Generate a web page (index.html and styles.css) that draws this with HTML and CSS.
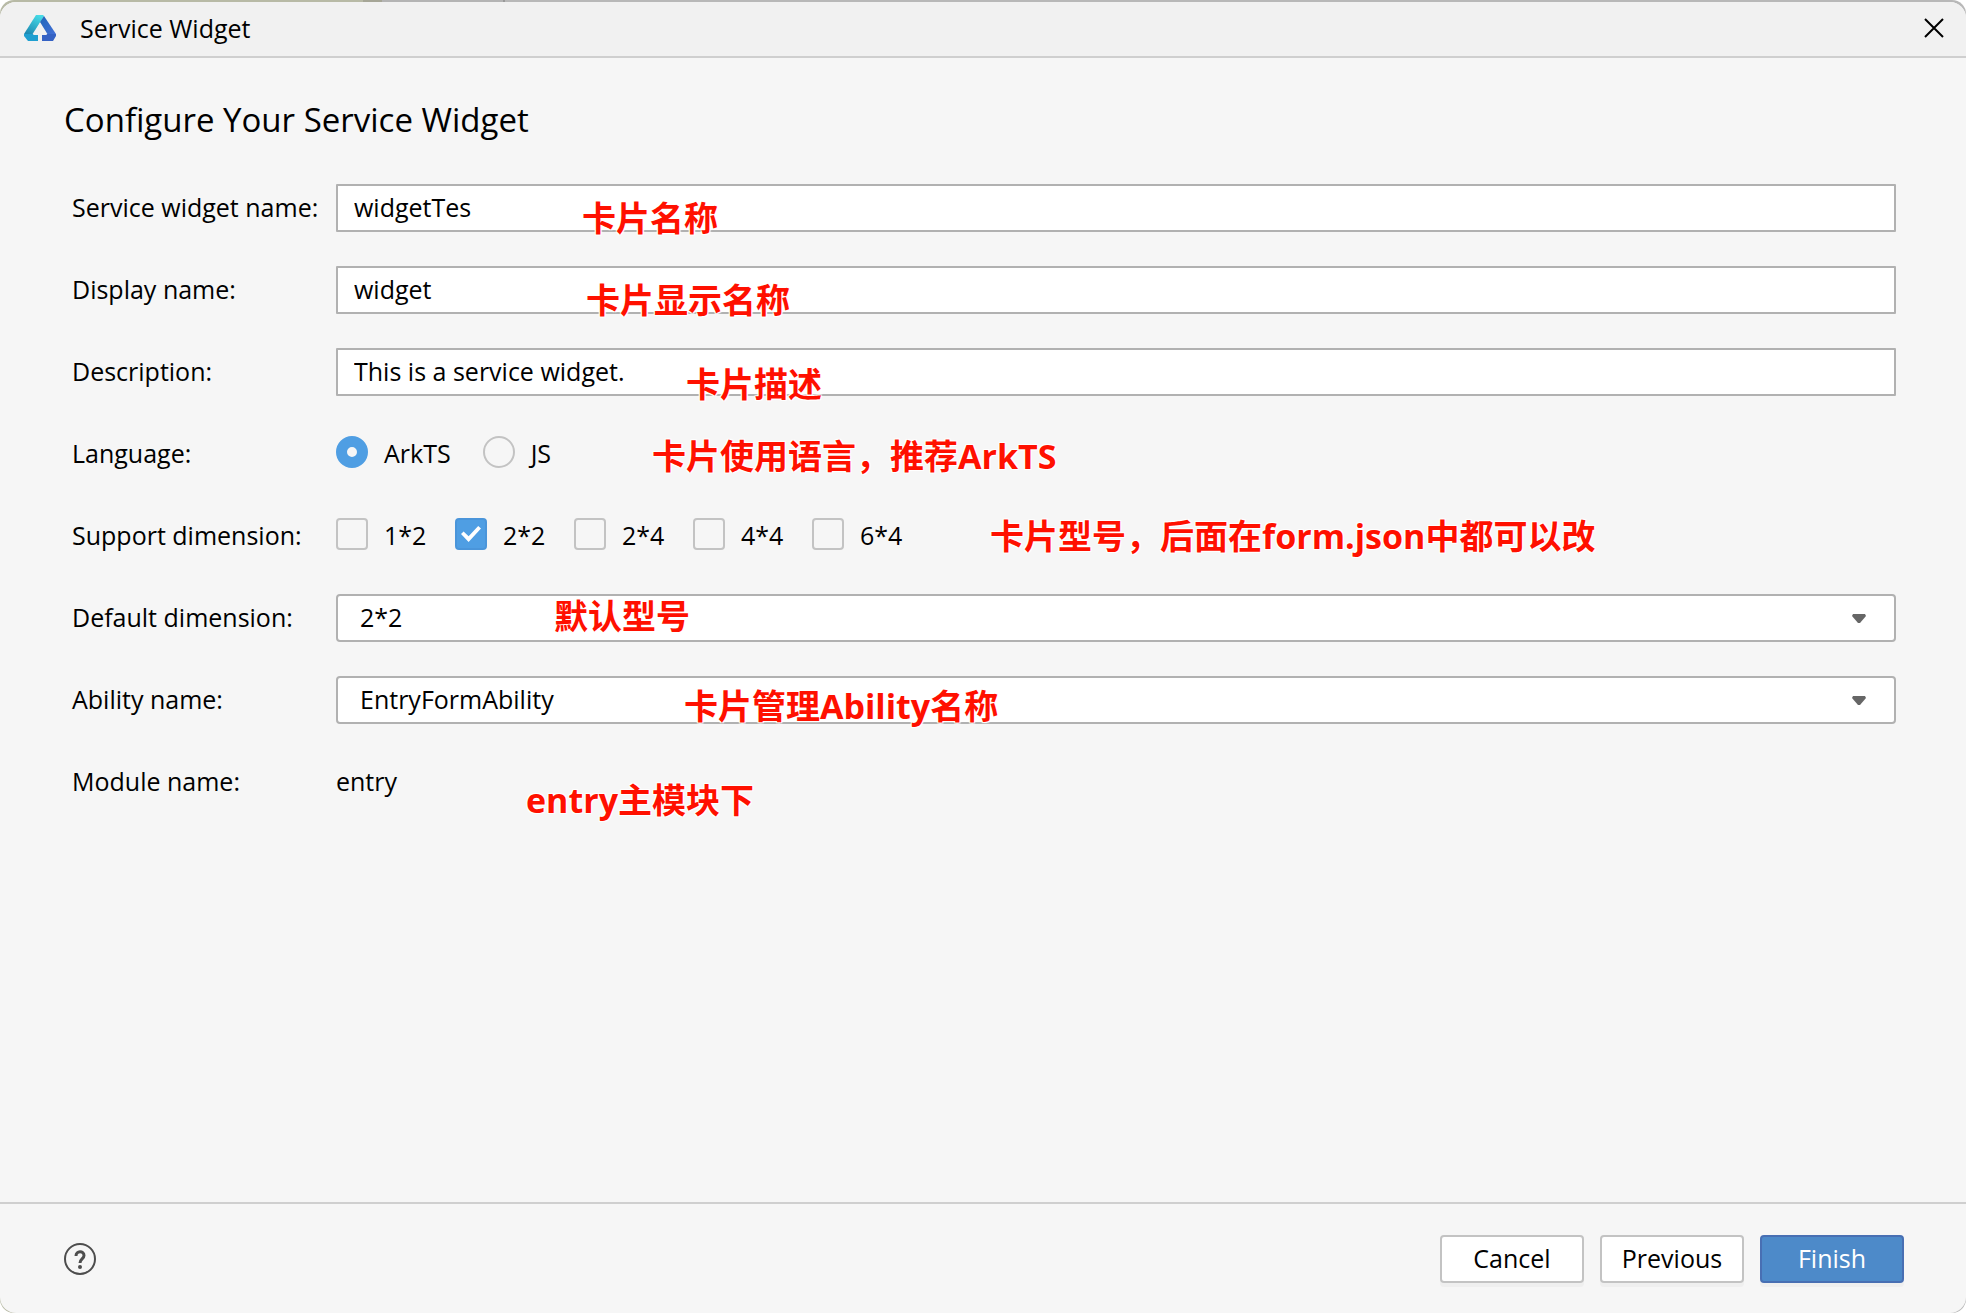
FILE: index.html
```html
<!DOCTYPE html>
<html lang="en">

<head>
    <meta charset="UTF-8">
    <meta name="viewport" content="width=device-width, initial-scale=1.0">
    <title>Service Widget</title>

    <link rel="stylesheet" href="styles.css">
</head>

<body>
    <div class="window_frame">
        <form action="#" class="window" name="widgetForm">
            <header class="title_bar">
                <svg class="logo" viewBox="0 0 32 26" aria-hidden="true">
                    <defs>
                        <linearGradient id="teal" x1="0.7" y1="0" x2="0.2" y2="1">
                            <stop offset="0" stop-color="#46dbe6" />
                            <stop offset="1" stop-color="#1c86b0" />
                        </linearGradient>
                        <linearGradient id="blue" x1="0" y1="0" x2="1" y2="1">
                            <stop offset="0" stop-color="#1f66b8" />
                            <stop offset="1" stop-color="#4470d8" />
                        </linearGradient>
                    </defs>
                    <path d="M12 0H19L20 1L8 20H0V19Z" fill="url(#teal)" />
                    <path d="M20 1L32 19V20H24L16 7Z" fill="url(#blue)" />
                    <path d="M0 19H14V26H4L0 21Z" fill="#1f9fd0" />
                    <path d="M18 19H32V21L29 26H18Z" fill="#3562c4" />
                    <path d="M16 8L23 20H18V21H14V20H9Z" fill="#f1f1f1" />
                </svg>
                <span class="window_title">Service Widget</span>
                <button type="button" class="close_btn" aria-label="Close">
                    <svg viewBox="0 0 20 20" aria-hidden="true">
                        <path d="M1 1L19 19M19 1L1 19" />
                    </svg>
                </button>
            </header>

            <main class="content">
                <h1>Configure Your Service Widget</h1>

                <div class="row">
                    <label for="widgetName">Service widget name:</label>
                    <div class="field">
                        <input type="text" class="text_input" name="widgetName" id="widgetName" value="widgetTes">
                        <span class="note note_name">卡片名称</span>
                    </div>
                </div>

                <div class="row">
                    <label for="displayName">Display name:</label>
                    <div class="field">
                        <input type="text" class="text_input" name="displayName" id="displayName" value="widget">
                        <span class="note note_display">卡片显示名称</span>
                    </div>
                </div>

                <div class="row">
                    <label for="description">Description:</label>
                    <div class="field">
                        <input type="text" class="text_input" name="description" id="description"
                            value="This is a service widget.">
                        <span class="note note_description">卡片描述</span>
                    </div>
                </div>

                <div class="row" role="radiogroup" aria-labelledby="languageLabel">
                    <span id="languageLabel">Language:</span>
                    <div class="field options">
                        <label class="option"><input type="radio" name="language" value="ArkTS" checked>ArkTS</label>
                        <label class="option"><input type="radio" name="language" value="JS">JS</label>
                        <span class="note note_language">卡片使用语言，推荐ArkTS</span>
                    </div>
                </div>

                <div class="row" role="group" aria-labelledby="supportLabel">
                    <span id="supportLabel">Support dimension:</span>
                    <div class="field options dimensions">
                        <label class="option"><input type="checkbox" name="dimension" value="1*2">1*2</label>
                        <label class="option"><input type="checkbox" name="dimension" value="2*2" checked>2*2</label>
                        <label class="option"><input type="checkbox" name="dimension" value="2*4">2*4</label>
                        <label class="option"><input type="checkbox" name="dimension" value="4*4">4*4</label>
                        <label class="option"><input type="checkbox" name="dimension" value="6*4">6*4</label>
                        <span class="note note_support">卡片型号，后面在form.json中都可以改</span>
                    </div>
                </div>

                <div class="row">
                    <label for="defaultDimension">Default dimension:</label>
                    <div class="field">
                        <select name="defaultDimension" id="defaultDimension">
                            <option selected>2*2</option>
                        </select>
                        <svg class="arrow" viewBox="0 0 14 10" aria-hidden="true">
                            <path d="M1 0H13L14 2L8 9H6L0 2Z" />
                        </svg>
                        <span class="note note_default">默认型号</span>
                    </div>
                </div>

                <div class="row">
                    <label for="abilityName">Ability name:</label>
                    <div class="field">
                        <select name="abilityName" id="abilityName">
                            <option selected>EntryFormAbility</option>
                        </select>
                        <svg class="arrow" viewBox="0 0 14 10" aria-hidden="true">
                            <path d="M1 0H13L14 2L8 9H6L0 2Z" />
                        </svg>
                        <span class="note note_ability">卡片管理Ability名称</span>
                    </div>
                </div>

                <div class="row">
                    <span>Module name:</span>
                    <div class="field">
                        <span>entry</span>
                        <span class="note note_module">entry主模块下</span>
                    </div>
                </div>
            </main>

            <footer class="footer">
                <button type="button" class="help_btn" aria-label="Help">
                    <svg viewBox="0 0 32 32" aria-hidden="true">
                        <circle cx="16" cy="16" r="15" />
                        <path d="M12 13C12 7.500 20 7.500 20 12.500C20 16 16 16 16 20" />
                        <circle class="dot" cx="16" cy="24" r="2" />
                    </svg>
                </button>
                <button type="button" class="btn">Cancel</button>
                <button type="button" class="btn">Previous</button>
                <button type="submit" class="btn btn_primary">Finish</button>
            </footer>
        </form>
    </div>
</body>

</html>
```
FILE: styles.css
```css
* {
    box-sizing: border-box;
}

body {
    margin: 0;
    background: #ffffff;
    color: #000000;
    font-family: "Open Sans", "Noto Sans CJK SC", sans-serif;
    font-size: 25px;
    line-height: 36px;
}

input,
select,
button {
    font: inherit;
    color: inherit;
}

/* the strip behind the window shows along its top edge */
.window_frame {
    display: flex;
    min-height: 100vh;
    padding-top: 2px;
    border-radius: 14px;
    background: linear-gradient(to right, #b8baa6 363px, #a6a697 363px, #a6a697 382px, #b4b4b4 382px, #b4b4b4 503px, #999999 503px, #999999 505px, #b8b8b8 505px);
}

.window {
    flex: 1;
    display: flex;
    flex-direction: column;
    border-radius: 16px;
    background: #f6f6f6;
    overflow: hidden;
}

.title_bar {
    display: flex;
    align-items: center;
    height: 56px;
    padding: 0 22px 2px 24px;
    background: #f1f1f1;
    border-bottom: 2px solid #cfcfcf;
}

.logo {
    width: 32px;
    height: 26px;
    margin-right: 24px;
}

.close_btn,
.help_btn {
    display: flex;
    padding: 0;
    border: none;
    background: transparent;
    cursor: pointer;
}

.close_btn {
    margin-left: auto;
}

.close_btn svg {
    width: 20px;
    height: 20px;
    stroke: #000000;
    stroke-width: 2;
}

.content {
    flex: 1;
    display: flex;
    flex-direction: column;
    gap: 34px;
    padding: 38px 70px 40px 72px;
}

h1 {
    margin: 0 0 6px -8px;
    font-size: 33px;
    font-weight: 400;
    line-height: 48px;
}

.row {
    display: grid;
    grid-template-columns: 264px 1fr;
    align-items: center;
    height: 48px;
}

.field {
    position: relative;
    display: flex;
    align-items: center;
    height: 48px;
}

.text_input,
select {
    width: 100%;
    height: 48px;
    border: 2px solid #b1b1b1;
    background: #ffffff;
    outline: none;
}

.text_input {
    padding: 0 16px 2px;
    border-radius: 1px;
}

select {
    appearance: none;
    padding: 0 22px 2px;
    border-radius: 4px;
}

.row > label,
.row > span,
.field > span:first-child {
    padding-bottom: 2px;
}

.arrow {
    position: absolute;
    right: 30px;
    top: 20px;
    width: 14px;
    height: 10px;
    fill: #666666;
    pointer-events: none;
}

.options {
    gap: 32px;
}

.option {
    display: flex;
    align-items: center;
    gap: 16px;
    padding-bottom: 2px;
}

.dimensions .option {
    width: 87px;
}

.option input {
    appearance: none;
    flex-shrink: 0;
    width: 32px;
    height: 32px;
    margin: 0 0 2px;
    border: 2px solid #c3c3c3;
    border-radius: 4px;
    background: #f6f6f6;
}

.option input[type="radio"] {
    border-radius: 50%;
}

.option input[type="radio"]:checked {
    border: 11px solid #4f9ee3;
}

.option input[type="checkbox"]:checked {
    display: grid;
    place-items: center;
    border-color: #4a95da;
    background: #4f9ee3;
}

.option input[type="checkbox"]:checked::before {
    content: "";
    width: 20px;
    height: 16px;
    background: #ffffff;
    clip-path: polygon(0 50%, 13% 34%, 38% 64%, 86% 0, 100% 16%, 38% 100%);
}

/* red remarks written over the form */
.note {
    position: absolute;
    top: 0;
    color: #ff1000;
    font-size: 34px;
    font-weight: 700;
    line-height: 48px;
    white-space: nowrap;
    text-shadow: 1px 1px 1px #ffffff, -1px -1px 1px #ffffff, 1px -1px 1px #ffffff, -1px 1px 1px #ffffff;
    pointer-events: none;
}

.note_name {
    left: 246px;
    top: 10px;
}

.note_display {
    left: 250px;
    top: 10px;
}

.note_description {
    left: 350px;
    top: 12px;
}

.note_language {
    left: 316px;
    top: 2px;
}

.note_support {
    left: 654px;
}

.note_default {
    left: 218px;
    top: -2px;
}

.note_ability {
    left: 348px;
    top: 6px;
}

.note_module {
    left: 190px;
    top: 18px;
}

.footer {
    display: flex;
    align-items: center;
    gap: 16px;
    height: 111px;
    padding: 0 62px 0 64px;
    border-top: 2px solid #cfcfcf;
}

.help_btn {
    margin-right: auto;
}

.help_btn svg {
    width: 32px;
    height: 32px;
    fill: none;
    stroke: #4d4d4d;
    stroke-width: 2;
}

.help_btn path {
    stroke-width: 3;
}

.help_btn .dot {
    fill: #4d4d4d;
    stroke: none;
}

.btn {
    width: 144px;
    height: 48px;
    padding: 0 0 2px;
    border: 2px solid #c3c3c3;
    border-radius: 4px;
    background: #ffffff;
    box-shadow: 0 4px 0 #efefef;
    cursor: pointer;
}

.btn_primary {
    border-color: #486fb3;
    background: #4d8ac9;
    color: #ffffff;
}
```
